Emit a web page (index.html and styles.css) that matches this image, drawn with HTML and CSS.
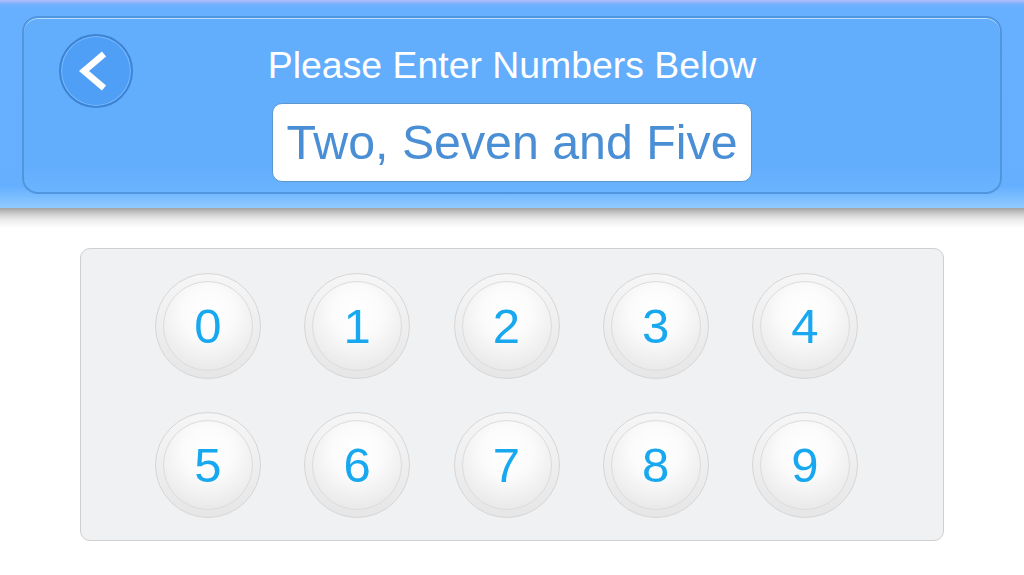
FILE: index.html
```html
<!DOCTYPE html>
<html>
<head>
<meta charset="utf-8">
<link rel="stylesheet" href="styles.css">
</head>
<body>
<div class="app">
  <header class="header">
    <div class="panel">
      <button class="back" aria-label="Back">
        <svg width="74" height="74" viewBox="0 0 74 74"><path d="M45 20 L25 37 L45 54" fill="none" stroke="#fff" stroke-width="6.5" stroke-linejoin="miter"/></svg>
      </button>
      <div class="center">
        <div class="title">Please Enter Numbers Below</div>
        <div class="answer">Two, Seven and Five</div>
      </div>
    </div>
  </header>
  <main class="content">
    <div class="pad">
      <div class="key"><span class="face">0</span></div>
      <div class="key"><span class="face">1</span></div>
      <div class="key"><span class="face">2</span></div>
      <div class="key"><span class="face">3</span></div>
      <div class="key"><span class="face">4</span></div>
      <div class="key"><span class="face">5</span></div>
      <div class="key"><span class="face">6</span></div>
      <div class="key"><span class="face">7</span></div>
      <div class="key"><span class="face">8</span></div>
      <div class="key"><span class="face">9</span></div>
    </div>
  </main>
</div>
</body>
</html>
```

FILE: styles.css
```css
html, body {
  margin: 0;
  padding: 0;
  background: #ffffff;
}
.app {
  width: 1024px;
  height: 575px;
  overflow: hidden;
  font-family: "Liberation Sans", Arial, sans-serif;
  display: flex;
  flex-direction: column;
}
.header {
  height: 208px;
  box-sizing: border-box;
  padding: 16px 22px 0 22px;
  background: linear-gradient(to bottom, #b4bcf6 0, #78b0fd 4px, #66b0ff 8px, #65affe 186px, #78bcff 196px, #92caff 208px);
}
.panel {
  height: 178px;
  box-sizing: border-box;
  border: 2px solid #4f96de;
  border-radius: 16px;
  background: linear-gradient(to bottom, #63adfd 0, #63adfd 85%, #6ab3fe 100%);
  box-shadow: inset 0 1px 0 #b8dcff;
  display: grid;
  grid-template-columns: 1fr auto 1fr;
  align-items: start;
}
.back {
  grid-column: 1;
  grid-row: 1;
  justify-self: start;
  margin: 16px 0 0 35px;
  width: 74px;
  height: 74px;
  padding: 0;
  border: 2px solid #3e84d4;
  border-radius: 50%;
  background: #4f9ff6;
  box-shadow: inset 0 0 0 1px #7dbcff;
  display: flex;
  align-items: center;
  justify-content: center;
  box-sizing: border-box;
}
.back svg {
  display: block;
  flex: none;
}
.center {
  grid-column: 2;
  grid-row: 1;
  display: flex;
  flex-direction: column;
  align-items: center;
}
.title {
  margin-top: 26px;
  color: #ffffff;
  font-size: 37.4px;
  line-height: 42px;
  white-space: nowrap;
}
.answer {
  margin-top: 17px;
  height: 79px;
  box-sizing: border-box;
  padding: 0 13.5px;
  background: #ffffff;
  border: 1px solid #5b98cf;
  border-radius: 10px;
  color: #4a8fd6;
  font-size: 48.3px;
  line-height: 55px;
  display: flex;
  align-items: center;
  white-space: nowrap;
}
.content {
  flex: 1;
  background: linear-gradient(to bottom, #a2a2a2 0, #cfcfcf 6px, #ececec 12px, #ffffff 20px);
  padding-top: 40px;
}
.pad {
  margin-left: 80px;
  width: 864px;
  height: 293px;
  box-sizing: border-box;
  border: 1px solid #cfcfcf;
  border-radius: 10px;
  background: #f0f1f3;
  padding: 24px 0 0 74px;
  display: grid;
  grid-template-columns: repeat(5, 106px);
  grid-auto-rows: 106px;
  column-gap: 43.25px;
  row-gap: 33px;
}
.key {
  width: 106px;
  height: 106px;
  box-sizing: border-box;
  border-radius: 50%;
  border: 1px solid #d6d6d6;
  background: linear-gradient(to bottom, #f6f6f6, #e6e6e6);
  display: flex;
  align-items: center;
  justify-content: center;
}
.face {
  width: 90px;
  height: 90px;
  box-sizing: border-box;
  border-radius: 50%;
  border: 1px solid #dcdcdc;
  background: radial-gradient(circle at 50% 35%, #ffffff 0, #fbfbfb 35%, #ededed 70%, #e0e0e0 100%);
  display: flex;
  align-items: center;
  justify-content: center;
  color: #17a8f0;
  font-size: 49px;
  line-height: 1;
  padding-top: 1px;
}
```
